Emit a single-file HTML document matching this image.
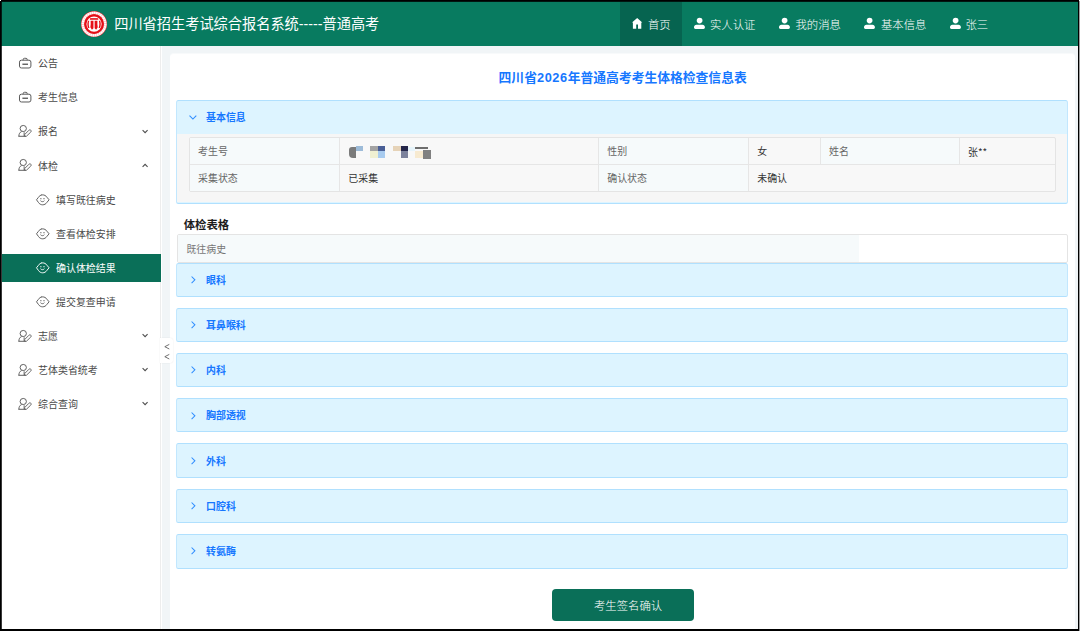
<!DOCTYPE html>
<html lang="zh-CN">
<head>
<meta charset="utf-8">
<title>四川省招生考试综合报名系统-----普通高考</title>
<style>
*{box-sizing:border-box;margin:0;padding:0}
html,body{width:1080px;height:631px;overflow:hidden;background:#fff}
body{position:relative;font-family:"Liberation Sans","Noto Sans CJK SC",sans-serif;color:#4d4d4d}
.a{position:absolute}
.t{position:absolute;white-space:nowrap;line-height:20px;height:20px}
svg{position:absolute;overflow:visible}
#frame-t{left:0;top:0;width:1080px;height:2px;background:linear-gradient(#000 0,#000 1px,rgba(0,0,0,.82) 1px)}
#frame-l{left:0;top:0;width:2px;height:631px;background:linear-gradient(90deg,#000 0,#000 1px,rgba(0,0,0,.78) 1px)}
#frame-b{left:0;top:629px;width:1080px;height:2px;background:#000}
#frame-r{left:1078px;top:0;width:1px;height:631px;background:#000}
#frame-r2{left:1079px;top:0;width:1px;height:631px;background:#9e9e9e}
#px1{left:0;top:0;width:1px;height:1px;background:#fff}
#px2{left:1079px;top:0;width:1px;height:1px;background:#fff}
#header{left:0;top:0;width:1080px;height:46px;background:#087b60}
#title{left:114.2px;top:14px;font-size:14.21px;color:#fff}
.nav{top:2px;height:44px}
.nav.on{background:#066450}
.nt{font-size:11.37px;color:#fff;font-weight:300}
#side{left:0;top:46px;width:162.2px;height:585px;background:#fff}
#sideline{left:160px;top:46px;width:1px;height:583px;background:#ededed}
.mt{font-size:9.95px;color:#4a4a4a}
.mt.on{color:#fff}
#active{left:2px;top:253.7px;width:158.6px;height:28.1px;background:#0a6f58}
#handle{left:160px;top:338px;width:13px;height:25px;background:#fff;border-radius:0 3px 3px 0;box-shadow:0 0 1.5px rgba(0,0,0,0.10)}
#main{left:162.2px;top:46px;width:915.8px;height:583px;background:#f1f5f7}
#card{left:170px;top:53px;width:905.3px;height:590px;background:#fff;border-radius:4px;border-top:1px solid #f8fafb}
#ptitle{left:170px;width:905.3px;top:68px;text-align:center;font-size:12.79px;font-weight:bold;color:#1677ff}
#ptitle span{letter-spacing:0.6px}
.panel{left:176px;width:892px;background:#ddf4ff;border:1px solid #b0e0fe;border-left-color:#c2e7fe;border-right-color:#c2e7fe;border-radius:2.5px}
.pt{font-size:9.95px;font-weight:bold;color:#1677ff;left:206px}
.pbody{left:177px;width:890px;background:#f6f6f6}
.tb{background:#f8f8f8;border:1px solid #e4e4e4}
.lab{background:#f6fafb}
.vl{background:#e6e6e6;width:1px}
.hl{background:#e6e6e6;height:1px}
.c1{font-size:9.95px;color:#666}
.c2{font-size:9.95px;color:#333}
#h2{left:183.7px;top:215px;font-size:11.37px;font-weight:bold;color:#1c1c1c}
#btn{left:552px;top:589.4px;width:141.5px;height:31.4px;background:#0a6f58;border-radius:4px}
#btnt{left:594px;top:596px;font-size:11.37px;color:#fff;font-weight:300}
.mz{position:absolute}
.st{font-family:"Noto Sans CJK SC","Liberation Sans",sans-serif}
</style>
</head>
<body>
<div class="a" id="main"></div>
<div class="a" id="card"></div>
<div class="a" id="side"></div>
<div class="a" id="sideline"></div>
<div class="a" id="header"></div>
<svg id="logo" style="left:80.55px;top:10.95px" width="26.1" height="26.1" viewBox="-13.05 -13.05 26.1 26.1">
<defs><clipPath id="lc"><circle cx="0" cy="0" r="7.1"/></clipPath></defs>
<circle cx="0" cy="0" r="13.05" fill="#ea2a30"/>
<circle cx="0" cy="0" r="11.3" fill="none" stroke="#f9c3c5" stroke-width="2.7"/>
<circle cx="0" cy="0" r="11.3" fill="none" stroke="#fff" stroke-width="2.1" stroke-dasharray="1.5 0.7"/>
<circle cx="0" cy="0" r="9.6" fill="#e60f17"/>
<circle cx="0" cy="0" r="7.6" fill="#fff"/>
<g clip-path="url(#lc)" fill="#e60f17">
<rect x="-4.2" y="-5.9" width="8.4" height="1.6"/>
<path d="M-6.7 -3.2h1.9c-0.7 2.3-0.7 4.7 0.2 7.2h-2.1z"/>
<path d="M6.7 -3.2h-1.9c0.7 2.3 0.7 4.7-0.2 7.2h2.1z"/>
<path d="M-3.4 -3.4h2.8v7.6l-1.5 1.6-1.600-2.600c0.400-2.200 0.500-4.300 0.300-6.600z"/>
<path d="M3.4 -3.4h-2.8v7.600l1.500 1.600 1.600-2.600c-0.400-2.200-0.500-4.300-0.300-6.600z"/>
</g>
</svg>
<div id="title" class="t">四川省招生考试综合报名系统-----普通高考</div>
<div class="a nav on" style="left:620.0px;width:62.0px"></div>
<svg style="left:632.00px;top:17.90px" width="10.3" height="10.7" viewBox="0 0 10.3 10.7"><path d="M5.150 0L10.300 4.600H9.300V10.700H6V6.500H4.200V10.700H0.900V4.600H0z" fill="#fff"/></svg>
<div class="t nt" style="left:648.0px;top:15px;">首页</div>
<div class="a nav" style="left:682.0px;width:85.3px"></div>
<svg style="left:693.80px;top:18.00px" width="10.9" height="11" viewBox="0 0 10.9 11"><path d="M5.500-0.300c0.900 0 1.700 0.200 2.400 0.700c0.400 0.600 0.600 1.300 0.600 2.100C8.500 4.100 7.200 5.400 5.500 5.400S2.700 4.100 2.700 2.500S3.900-0.300 5.500-0.300zM2.400 6.700h6.100c1.300 0 2.400 1 2.400 2.300v0.500c0 .8-.6 1.400-1.400 1.400H1.400C.6 10.900 0 10.300 0 9.500V9c0-1.300 1.100-2.300 2.400-2.300z" fill="#fff"/></svg>
<div class="t nt" style="left:710.0px;top:15px;">实人认证</div>
<div class="a nav" style="left:767.3px;width:85.3px"></div>
<svg style="left:779.00px;top:18.00px" width="10.9" height="11" viewBox="0 0 10.9 11"><path d="M5.500-0.300c0.900 0 1.700 0.200 2.400 0.700c0.400 0.600 0.600 1.300 0.600 2.100C8.500 4.100 7.200 5.400 5.500 5.400S2.700 4.100 2.700 2.500S3.900-0.300 5.500-0.300zM2.400 6.700h6.100c1.300 0 2.400 1 2.400 2.300v0.500c0 .8-.6 1.400-1.400 1.400H1.400C.6 10.900 0 10.300 0 9.500V9c0-1.300 1.100-2.300 2.400-2.300z" fill="#fff"/></svg>
<div class="t nt" style="left:795.5px;top:15px;">我的消息</div>
<div class="a nav" style="left:852.6px;width:85.3px"></div>
<svg style="left:864.30px;top:18.00px" width="10.9" height="11" viewBox="0 0 10.9 11"><path d="M5.500-0.300c0.900 0 1.700 0.200 2.400 0.700c0.400 0.600 0.600 1.300 0.600 2.100C8.500 4.100 7.200 5.400 5.500 5.400S2.700 4.100 2.700 2.500S3.900-0.300 5.500-0.300zM2.400 6.700h6.100c1.300 0 2.400 1 2.400 2.300v0.500c0 .8-.6 1.400-1.400 1.400H1.400C.6 10.900 0 10.300 0 9.500V9c0-1.300 1.100-2.300 2.400-2.300z" fill="#fff"/></svg>
<div class="t nt" style="left:881.0px;top:15px;">基本信息</div>
<div class="a nav" style="left:937.9px;width:62.0px"></div>
<svg style="left:949.50px;top:18.00px" width="10.9" height="11" viewBox="0 0 10.9 11"><path d="M5.500-0.300c0.900 0 1.700 0.200 2.400 0.700c0.400 0.600 0.600 1.300 0.600 2.100C8.500 4.100 7.200 5.400 5.500 5.400S2.700 4.100 2.700 2.500S3.900-0.300 5.500-0.300zM2.400 6.700h6.100c1.300 0 2.400 1 2.400 2.300v0.500c0 .8-.6 1.400-1.400 1.400H1.400C.6 10.900 0 10.300 0 9.500V9c0-1.300 1.100-2.300 2.400-2.300z" fill="#fff"/></svg>
<div class="t nt" style="left:965.5px;top:15px;">张三</div>
<div class="a" id="active"></div>
<svg style="left:18.60px;top:57.30px" width="12.4" height="11.5" viewBox="0 0 12.4 11.5"><rect x="0.500" y="3.200" width="11.400" height="7.800" rx="1.900" fill="none" stroke="#595959" stroke-width="1"/><path d="M4.200 3.200V2.500a1.200 1.200 0 0 1 1.200-1.200h1.600a1.200 1.200 0 0 1 1.200 1.200V3.200" fill="none" stroke="#595959" stroke-width="0.950"/><path d="M3.400 7.250h5.600" stroke="#595959" stroke-width="1.350"/></svg>
<div class="t mt" style="left:38.1px;top:54px;">公告</div>
<svg style="left:18.60px;top:91.40px" width="12.4" height="11.5" viewBox="0 0 12.4 11.5"><rect x="0.500" y="3.200" width="11.400" height="7.800" rx="1.900" fill="none" stroke="#595959" stroke-width="1"/><path d="M4.200 3.200V2.500a1.200 1.200 0 0 1 1.200-1.200h1.600a1.200 1.200 0 0 1 1.200 1.200V3.200" fill="none" stroke="#595959" stroke-width="0.950"/><path d="M3.400 7.250h5.600" stroke="#595959" stroke-width="1.350"/></svg>
<div class="t mt" style="left:38.1px;top:88px;">考生信息</div>
<svg style="left:18.30px;top:124.90px" width="13" height="12" viewBox="0 0 13 12"><ellipse cx="5.250" cy="3.500" rx="3.150" ry="3.050" fill="none" stroke="#595959" stroke-width="0.950"/><path d="M0.900 11.300c0-2.500 0.900-4 2.700-4.700M0.400 11.300h7.600M6.150 7.300v4" fill="none" stroke="#595959" stroke-width="0.950"/><path d="M6.600 11.100l0.100-1.600 4.300-4.300c0.500-0.500 1.300-0.500 1.800 0s0.500 1.300 0 1.800l-4.300 4.200z" fill="#fff" stroke="#595959" stroke-width="0.900" stroke-linejoin="round"/></svg>
<div class="t mt" style="left:38.1px;top:122px;">报名</div>
<svg style="left:141.70px;top:128.50px" width="6.2" height="5" viewBox="0 0 6.2 5"><path d="M0.600 1.200l2.500 2.500L5.600 1.200" fill="none" stroke="#4d4d4d" stroke-width="1.100"/></svg>
<svg style="left:18.30px;top:159.00px" width="13" height="12" viewBox="0 0 13 12"><ellipse cx="5.250" cy="3.500" rx="3.150" ry="3.050" fill="none" stroke="#595959" stroke-width="0.950"/><path d="M0.900 11.300c0-2.500 0.900-4 2.700-4.700M0.400 11.300h7.600M6.150 7.300v4" fill="none" stroke="#595959" stroke-width="0.950"/><path d="M6.600 11.100l0.100-1.600 4.300-4.300c0.500-0.500 1.300-0.500 1.800 0s0.500 1.300 0 1.800l-4.300 4.200z" fill="#fff" stroke="#595959" stroke-width="0.900" stroke-linejoin="round"/></svg>
<div class="t mt" style="left:38.1px;top:157px;">体检</div>
<svg style="left:141.70px;top:162.60px" width="6.2" height="5" viewBox="0 0 6.2 5"><path d="M0.600 3.800l2.500-2.500L5.600 3.800" fill="none" stroke="#4d4d4d" stroke-width="1.100"/></svg>
<svg style="left:35.60px;top:193.60px" width="13.6" height="11.6" viewBox="0 0 13.6 11.6"><path d="M0.500 5.800L2.400 3.400A4.940 4.940 0 0 1 10.900 3.200L13.100 5.800L10.900 8.400A4.940 4.940 0 0 1 2.400 8.400Z" fill="none" stroke="#595959" stroke-width="0.950" stroke-linejoin="round"/><path d="M5 1.500L5.700 0.400" stroke="#595959" stroke-width="0.800"/><circle cx="4.900" cy="4.700" r="0.620" fill="#595959"/><circle cx="8" cy="4.700" r="0.620" fill="#595959"/><path d="M4.500 6.700c1 1.300 2.900 1.300 3.900 0" fill="none" stroke="#595959" stroke-width="0.900"/></svg>
<div class="t mt" style="left:56.0px;top:191px;">填写既往病史</div>
<svg style="left:35.60px;top:227.70px" width="13.6" height="11.6" viewBox="0 0 13.6 11.6"><path d="M0.500 5.800L2.400 3.400A4.940 4.940 0 0 1 10.900 3.200L13.100 5.800L10.900 8.400A4.940 4.940 0 0 1 2.400 8.400Z" fill="none" stroke="#595959" stroke-width="0.950" stroke-linejoin="round"/><path d="M5 1.500L5.700 0.400" stroke="#595959" stroke-width="0.800"/><circle cx="4.900" cy="4.700" r="0.620" fill="#595959"/><circle cx="8" cy="4.700" r="0.620" fill="#595959"/><path d="M4.500 6.700c1 1.300 2.900 1.300 3.900 0" fill="none" stroke="#595959" stroke-width="0.900"/></svg>
<div class="t mt" style="left:56.0px;top:225px;">查看体检安排</div>
<svg style="left:35.60px;top:261.80px" width="13.6" height="11.6" viewBox="0 0 13.6 11.6"><path d="M0.500 5.800L2.400 3.400A4.940 4.940 0 0 1 10.900 3.200L13.100 5.800L10.900 8.400A4.940 4.940 0 0 1 2.400 8.400Z" fill="none" stroke="#fff" stroke-width="0.950" stroke-linejoin="round"/><path d="M5 1.500L5.700 0.400" stroke="#fff" stroke-width="0.800"/><circle cx="4.900" cy="4.700" r="0.620" fill="#fff"/><circle cx="8" cy="4.700" r="0.620" fill="#fff"/><path d="M4.500 6.700c1 1.300 2.900 1.300 3.900 0" fill="none" stroke="#fff" stroke-width="0.900"/></svg>
<div class="t mt on" style="left:56.0px;top:259px;">确认体检结果</div>
<svg style="left:35.60px;top:295.90px" width="13.6" height="11.6" viewBox="0 0 13.6 11.6"><path d="M0.500 5.800L2.400 3.400A4.940 4.940 0 0 1 10.900 3.200L13.100 5.800L10.900 8.400A4.940 4.940 0 0 1 2.400 8.400Z" fill="none" stroke="#595959" stroke-width="0.950" stroke-linejoin="round"/><path d="M5 1.500L5.700 0.400" stroke="#595959" stroke-width="0.800"/><circle cx="4.900" cy="4.700" r="0.620" fill="#595959"/><circle cx="8" cy="4.700" r="0.620" fill="#595959"/><path d="M4.500 6.700c1 1.300 2.900 1.300 3.900 0" fill="none" stroke="#595959" stroke-width="0.900"/></svg>
<div class="t mt" style="left:56.0px;top:293px;">提交复查申请</div>
<svg style="left:18.30px;top:329.50px" width="13" height="12" viewBox="0 0 13 12"><ellipse cx="5.250" cy="3.500" rx="3.150" ry="3.050" fill="none" stroke="#595959" stroke-width="0.950"/><path d="M0.900 11.300c0-2.500 0.900-4 2.700-4.700M0.400 11.300h7.600M6.150 7.300v4" fill="none" stroke="#595959" stroke-width="0.950"/><path d="M6.600 11.100l0.100-1.600 4.300-4.300c0.500-0.500 1.300-0.500 1.800 0s0.500 1.300 0 1.800l-4.300 4.200z" fill="#fff" stroke="#595959" stroke-width="0.900" stroke-linejoin="round"/></svg>
<div class="t mt" style="left:38.1px;top:327px;">志愿</div>
<svg style="left:141.70px;top:333.10px" width="6.2" height="5" viewBox="0 0 6.2 5"><path d="M0.600 1.200l2.500 2.500L5.600 1.200" fill="none" stroke="#4d4d4d" stroke-width="1.100"/></svg>
<svg style="left:18.30px;top:363.60px" width="13" height="12" viewBox="0 0 13 12"><ellipse cx="5.250" cy="3.500" rx="3.150" ry="3.050" fill="none" stroke="#595959" stroke-width="0.950"/><path d="M0.900 11.300c0-2.500 0.900-4 2.700-4.700M0.400 11.300h7.600M6.150 7.300v4" fill="none" stroke="#595959" stroke-width="0.950"/><path d="M6.600 11.100l0.100-1.600 4.300-4.300c0.500-0.500 1.300-0.500 1.800 0s0.500 1.300 0 1.800l-4.300 4.200z" fill="#fff" stroke="#595959" stroke-width="0.900" stroke-linejoin="round"/></svg>
<div class="t mt" style="left:38.1px;top:361px;">艺体类省统考</div>
<svg style="left:141.70px;top:367.20px" width="6.2" height="5" viewBox="0 0 6.2 5"><path d="M0.600 1.200l2.500 2.500L5.600 1.200" fill="none" stroke="#4d4d4d" stroke-width="1.100"/></svg>
<svg style="left:18.30px;top:397.70px" width="13" height="12" viewBox="0 0 13 12"><ellipse cx="5.250" cy="3.500" rx="3.150" ry="3.050" fill="none" stroke="#595959" stroke-width="0.950"/><path d="M0.900 11.300c0-2.500 0.900-4 2.700-4.700M0.400 11.300h7.600M6.150 7.300v4" fill="none" stroke="#595959" stroke-width="0.950"/><path d="M6.600 11.100l0.100-1.600 4.300-4.300c0.500-0.500 1.300-0.500 1.800 0s0.500 1.300 0 1.800l-4.300 4.200z" fill="#fff" stroke="#595959" stroke-width="0.900" stroke-linejoin="round"/></svg>
<div class="t mt" style="left:38.1px;top:395px;">综合查询</div>
<svg style="left:141.70px;top:401.30px" width="6.2" height="5" viewBox="0 0 6.2 5"><path d="M0.600 1.200l2.500 2.500L5.600 1.200" fill="none" stroke="#4d4d4d" stroke-width="1.100"/></svg>
<div class="a" id="handle"></div>
<svg style="left:163.50px;top:343.70px" width="5.6" height="5.4" viewBox="0 0 5.6 5.4"><path d="M5.300 0.400L0.800 2.700L5.300 5" fill="none" stroke="#5a5a5a" stroke-width="0.850"/></svg>
<svg style="left:163.50px;top:354.00px" width="5.6" height="5.4" viewBox="0 0 5.6 5.4"><path d="M5.300 0.400L0.800 2.700L5.300 5" fill="none" stroke="#5a5a5a" stroke-width="0.850"/></svg>
<div class="t" id="ptitle">四川省<span>2026</span>年普通高考考生体格检查信息表</div>
<div class="a panel" style="top:100px;height:103.500px"></div>
<div class="a pbody" style="top:133.700px;height:68.800px"></div>
<svg style="left:189.00px;top:115.10px" width="7.8" height="5.2" viewBox="0 0 7.8 5.2"><path d="M0.500 0.600l3.400 3.500L7.300 0.600" fill="none" stroke="#2f8dff" stroke-width="1.050"/></svg>
<div class="t pt" style="top:108px;">基本信息</div>
<div class="a tb" style="left:189px;top:137px;width:867px;height:55px;border-radius:2px"></div>
<div class="a lab" style="left:190px;top:138px;width:149px;height:26px"></div>
<div class="a lab" style="left:190px;top:165px;width:149px;height:26px"></div>
<div class="a lab" style="left:599px;top:138px;width:149px;height:26px"></div>
<div class="a lab" style="left:599px;top:165px;width:149px;height:26px"></div>
<div class="a lab" style="left:821px;top:138px;width:138px;height:26px"></div>
<div class="a hl" style="left:190px;top:164px;width:865px"></div>
<div class="a vl" style="left:339px;top:138px;height:53px"></div>
<div class="a vl" style="left:598px;top:138px;height:53px"></div>
<div class="a vl" style="left:748px;top:138px;height:53px"></div>
<div class="a vl" style="left:820px;top:138px;height:26px"></div>
<div class="a vl" style="left:959px;top:138px;height:26px"></div>
<div class="t c1" style="left:198.0px;top:142px;">考生号</div>
<div class="t c1" style="left:607.2px;top:142px;">性别</div>
<div class="t c2" style="left:757.2px;top:142px;">女</div>
<div class="t c1" style="left:829.0px;top:142px;">姓名</div>
<div class="t c2" style="left:968.0px;top:142px;">张<span class="st">**</span></div>
<div class="t c1" style="left:198.0px;top:169px;">采集状态</div>
<div class="t c2" style="left:348.3px;top:169px;">已采集</div>
<div class="t c1" style="left:607.2px;top:169px;">确认状态</div>
<div class="t c2" style="left:757.2px;top:169px;">未确认</div>
<div class="mz" style="left:348.9px;top:146.9px;width:6.9px;height:10.9px;background:#7b7b7b;border-radius:3px 0 0 4px"></div>
<div class="mz" style="left:355.8px;top:146.3px;width:7.1px;height:4.8px;background:#9dbbd8"></div>
<div class="mz" style="left:370.2px;top:146.3px;width:7.8px;height:4.8px;background:#a3a3a3"></div>
<div class="mz" style="left:378.0px;top:146.3px;width:7.0px;height:4.8px;background:#4a5f96"></div>
<div class="mz" style="left:370.2px;top:151.1px;width:7.8px;height:6.7px;background:#f0f0d2"></div>
<div class="mz" style="left:378.0px;top:151.1px;width:7.0px;height:6.7px;background:#a8cbef"></div>
<div class="mz" style="left:393.1px;top:146.3px;width:7.5px;height:4.8px;background:#e6d3b8"></div>
<div class="mz" style="left:400.6px;top:146.3px;width:7.2px;height:4.8px;background:#24264a"></div>
<div class="mz" style="left:400.6px;top:151.1px;width:7.2px;height:7.1px;background:#7c829c"></div>
<div class="mz" style="left:407.8px;top:146.9px;width:7.2px;height:4.2px;background:#e6f4fa"></div>
<div class="mz" style="left:415.0px;top:147.2px;width:13.3px;height:2.2px;background:#6e6e6e"></div>
<div class="mz" style="left:415.0px;top:151.1px;width:8.1px;height:7.4px;background:#f7ead0"></div>
<div class="mz" style="left:423.1px;top:150.0px;width:7.8px;height:8.5px;background:#808080"></div>
<div id="h2" class="t">体检表格</div>
<div class="a tb" style="left:177px;top:234px;width:891px;height:29px;background:#fff;border-radius:2px"></div>
<div class="a lab" style="left:178px;top:235px;width:681px;height:27px"></div>
<div class="t c1" style="left:186.4px;top:240px;color:#777">既往病史</div>
<div class="a panel" style="top:263px;height:34px"></div>
<svg style="left:190.60px;top:275.80px" width="4.6" height="7.6" viewBox="0 0 4.6 7.6"><path d="M0.600 0.500l3.300 3.300L0.600 7.100" fill="none" stroke="#2f8dff" stroke-width="1.050"/></svg>
<div class="t pt" style="top:271px;">眼科</div>
<div class="a panel" style="top:308px;height:34px"></div>
<svg style="left:190.60px;top:321.07px" width="4.6" height="7.6" viewBox="0 0 4.6 7.6"><path d="M0.600 0.500l3.300 3.300L0.600 7.100" fill="none" stroke="#2f8dff" stroke-width="1.050"/></svg>
<div class="t pt" style="top:316px;">耳鼻喉科</div>
<div class="a panel" style="top:353px;height:34px"></div>
<svg style="left:190.60px;top:366.34px" width="4.6" height="7.6" viewBox="0 0 4.6 7.6"><path d="M0.600 0.500l3.300 3.300L0.600 7.100" fill="none" stroke="#2f8dff" stroke-width="1.050"/></svg>
<div class="t pt" style="top:361px;">内科</div>
<div class="a panel" style="top:398px;height:34px"></div>
<svg style="left:190.60px;top:411.61px" width="4.6" height="7.6" viewBox="0 0 4.6 7.6"><path d="M0.600 0.500l3.300 3.300L0.600 7.100" fill="none" stroke="#2f8dff" stroke-width="1.050"/></svg>
<div class="t pt" style="top:406px;">胸部透视</div>
<div class="a panel" style="top:443px;height:35px"></div>
<svg style="left:190.60px;top:456.88px" width="4.6" height="7.6" viewBox="0 0 4.6 7.6"><path d="M0.600 0.500l3.300 3.300L0.600 7.100" fill="none" stroke="#2f8dff" stroke-width="1.050"/></svg>
<div class="t pt" style="top:452px;">外科</div>
<div class="a panel" style="top:489px;height:34px"></div>
<svg style="left:190.60px;top:502.15px" width="4.6" height="7.6" viewBox="0 0 4.6 7.6"><path d="M0.600 0.500l3.300 3.300L0.600 7.100" fill="none" stroke="#2f8dff" stroke-width="1.050"/></svg>
<div class="t pt" style="top:497px;">口腔科</div>
<div class="a panel" style="top:534px;height:35px"></div>
<svg style="left:190.60px;top:547.42px" width="4.6" height="7.6" viewBox="0 0 4.6 7.6"><path d="M0.600 0.500l3.300 3.300L0.600 7.100" fill="none" stroke="#2f8dff" stroke-width="1.050"/></svg>
<div class="t pt" style="top:542px;">转氨酶</div>
<div class="a" id="btn"></div>
<div id="btnt" class="t">考生签名确认</div>
<div class="a" id="frame-t"></div>
<div class="a" id="frame-l"></div>
<div class="a" id="frame-b"></div>
<div class="a" id="frame-r"></div>
<div class="a" id="frame-r2"></div>
<div class="a" id="px1"></div>
<div class="a" id="px2"></div>
</body>
</html>
